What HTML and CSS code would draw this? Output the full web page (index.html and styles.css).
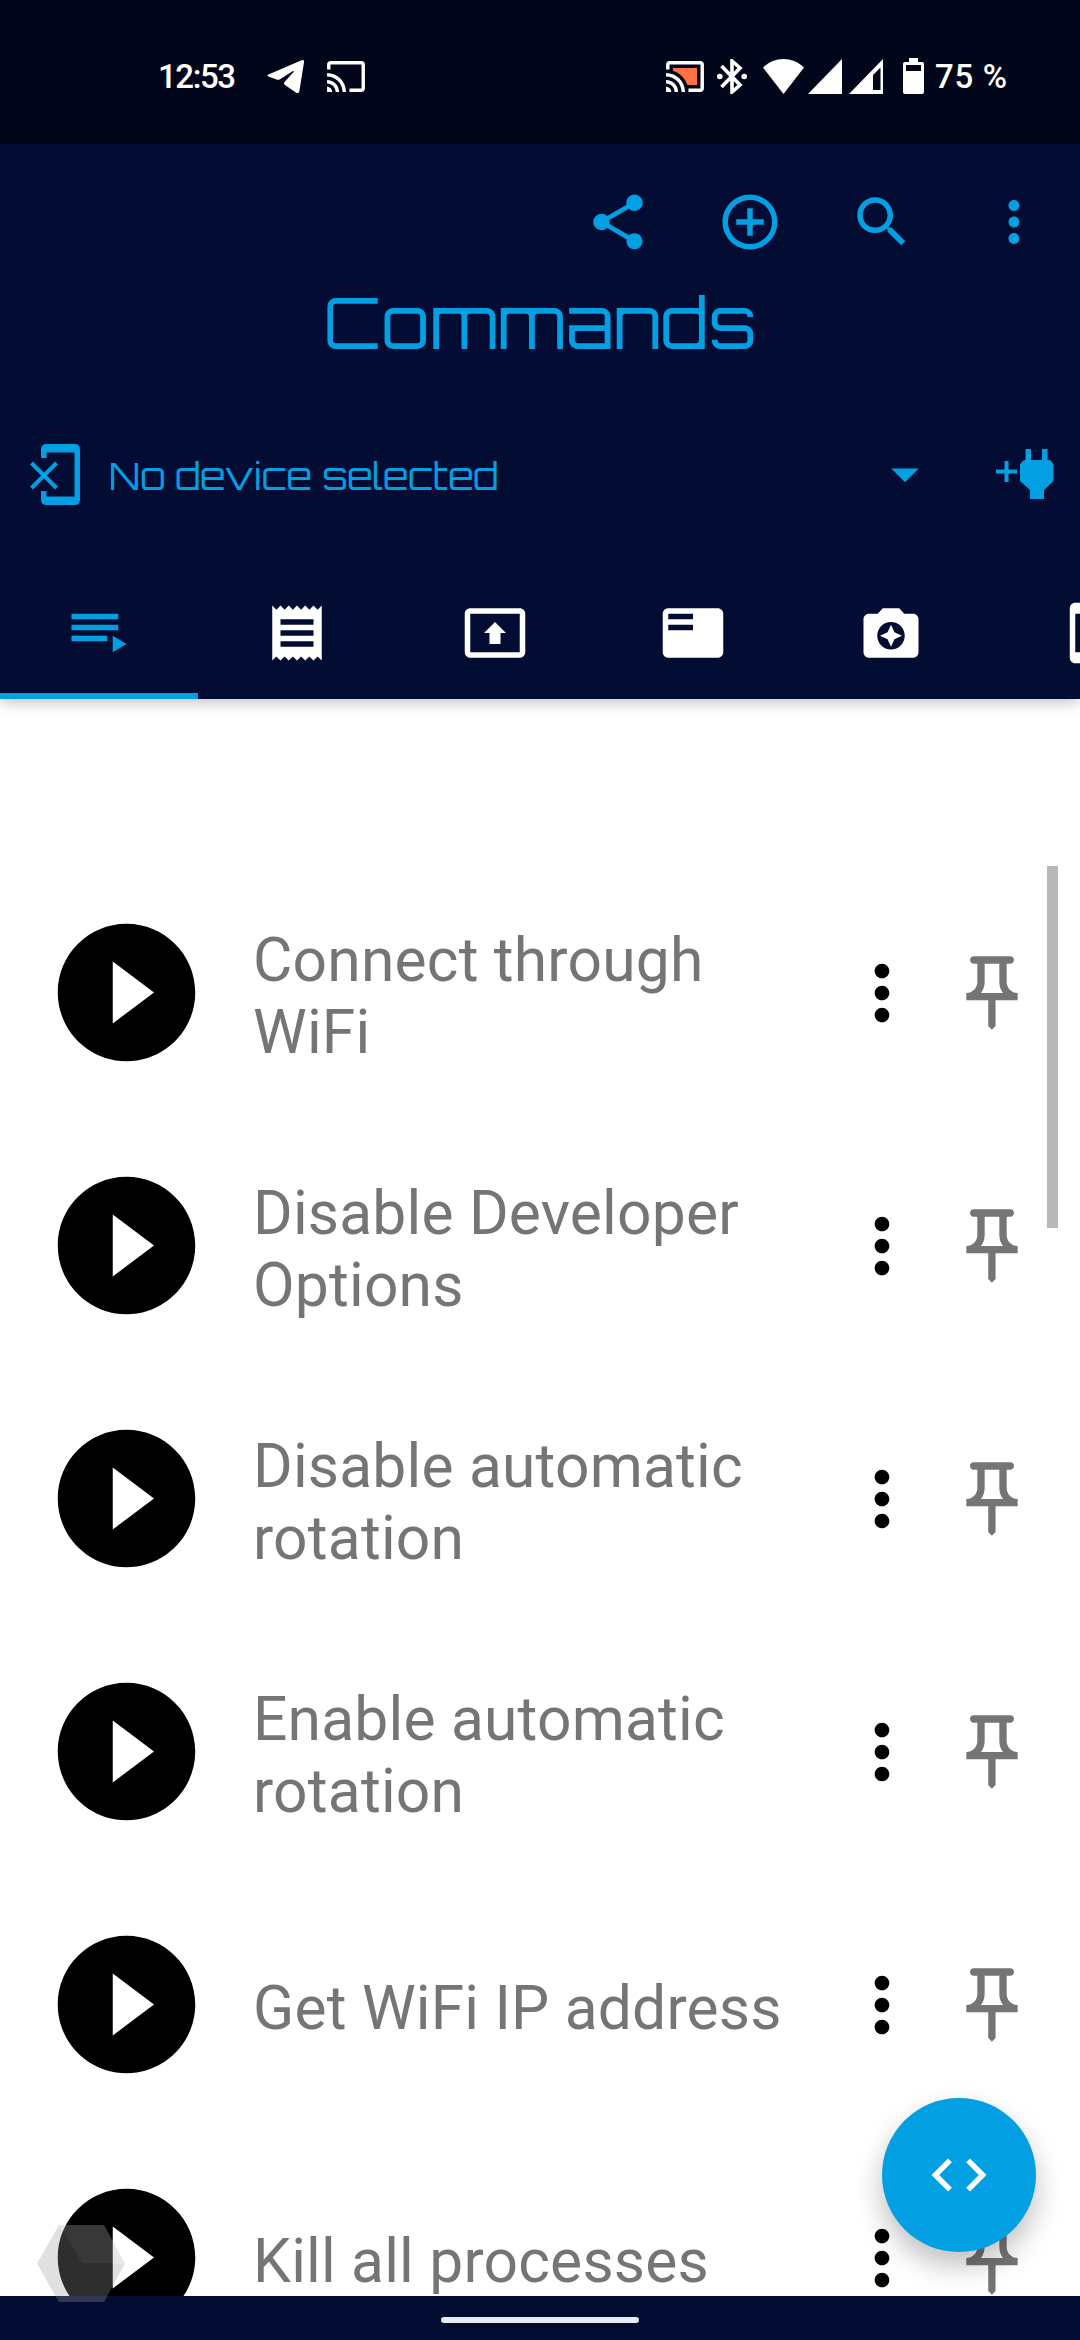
FILE: index.html
```html
<!DOCTYPE html>
<html lang="en">
<head>
    <meta charset="UTF-8">
    <meta name="viewport" content="width=device-width, initial-scale=1.0">
    <title>Commands</title>
    <link rel="stylesheet" href="styles.css">
</head>
<body>
    <!-- shared icons -->
    <svg class="sprite" aria-hidden="true">
        <symbol id="play" viewBox="0 0 24 24"><path d="M12 2C6.48 2 2 6.48 2 12s4.48 10 10 10 10-4.48 10-10S17.52 2 12 2zm-2 14.5v-9l6 4.5-6 4.5z"/></symbol>
        <symbol id="more" viewBox="0 0 24 24"><path d="M12 8c1.1 0 2-.9 2-2s-.9-2-2-2-2 .9-2 2 .9 2 2 2zm0 2c-1.1 0-2 .9-2 2s.9 2 2 2 2-.9 2-2-.9-2-2-2zm0 6c-1.1 0-2 .9-2 2s.9 2 2 2 2-.9 2-2-.9-2-2-2z"/></symbol>
        <symbol id="pin" viewBox="0 0 24 24"><path d="M14 4v5c0 1.12.37 2.16 1 3H9c.65-.86 1-1.9 1-3V4h4m3-2H7c-.55 0-1 .45-1 1s.45 1 1 1h1v5c0 1.66-1.34 3-3 3v2h5.97v7l1 1 1-1v-7H19v-2c-1.66 0-3-1.34-3-3V4h1c.55 0 1-.45 1-1s-.45-1-1-1z"/></symbol>
    </svg>

    <div class="screen">
        <div class="status-bar">
            <div class="status-left">
                <span class="clock">12:53</span>
                <svg class="telegram" width="37" height="33" viewBox="0 0 37 33"><path d="M1.5 14.5L34.5.3c1.6-.6 2.8.3 2.5 2L32.400 31c-.4 2-1.800 2.600-3.500 1.400L18 25c-1.300-1-1.300-2-.2-3.200L26.500 12c.5-.7-.1-1.200-.9-.7L13 19.200c-1.200.7-2.200.8-3.500.3L1.500 16.600c-1.500-.6-1.500-1.500 0-2.100z"/></svg>
                <svg class="cast" width="38" height="31" viewBox="1 3 22 18"><path d="M21 3H3c-1.100 0-2 .9-2 2v3h2V5h18v14h-7v2h7c1.100 0 2-.9 2-2V5c0-1.100-.9-2-2-2zM1 18v3h3c0-1.660-1.340-3-3-3zm0-4v2c2.760 0 5 2.240 5 5h2c0-3.870-3.130-7-7-7zm0-4v2c4.970 0 9 4.030 9 9h2c0-6.080-4.930-11-11-11z"/></svg>
            </div>
            <div class="status-right">
                <svg width="38" height="31" viewBox="1 3 22 18"><path class="cast-fill" d="M5 7v1.600C9 9.900 12.100 13 13.400 17H19V7z"/><path d="M21 3H3c-1.100 0-2 .9-2 2v3h2V5h18v14h-7v2h7c1.100 0 2-.9 2-2V5c0-1.100-.9-2-2-2zM1 18v3h3c0-1.660-1.340-3-3-3zm0-4v2c2.760 0 5 2.240 5 5h2c0-3.870-3.130-7-7-7zm0-4v2c4.970 0 9 4.030 9 9h2c0-6.080-4.930-11-11-11z"/></svg>
                <svg class="bluetooth" width="30" height="35" viewBox="0 0 30 35"><path class="line" d="M4.500 7L23 26l-8 7V2l8 7L4.500 28"/><circle cx="2.800" cy="17.500" r="2.800"/><circle cx="27.200" cy="17.500" r="2.800"/></svg>
                <svg class="wifi" width="41" height="35" viewBox="0 0 41 35"><path d="M0 8.500C12-2.800 29-2.800 41 8.500L20.500 35z"/></svg>
                <svg class="signal" width="34" height="35" viewBox="0 0 34 35"><path d="M34 0v35H0z"/></svg>
                <svg class="signal2" width="34" height="35" viewBox="0 0 34 35"><path fill-rule="evenodd" d="M34 0v35H0zM31.500 8.500L24 16v15h7.500z"/></svg>
                <svg class="battery" width="21" height="36" viewBox="0 0 21 36"><path fill-rule="evenodd" d="M6 0h9v4h4q2 0 2 2v28q0 2-2 2H2q-2 0-2-2V6q0-2 2-2h4zM3 7v6h15V7z"/></svg>
                <span class="percent">75 %</span>
            </div>
        </div>

        <div class="header">
            <div class="toolbar">
                <svg class="icon" viewBox="0 0 24 24"><path d="M18 16.080c-.76 0-1.440.3-1.960.77L8.910 12.700c.05-.23.09-.46.09-.7s-.04-.47-.09-.7l7.050-4.110c.54.5 1.250.81 2.040.81 1.660 0 3-1.340 3-3s-1.340-3-3-3-3 1.340-3 3c0 .24.04.47.09.7L8.040 9.810C7.500 9.310 6.790 9 6 9c-1.660 0-3 1.340-3 3s1.340 3 3 3c.79 0 1.500-.31 2.040-.81l7.120 4.160c-.05.21-.08.43-.08.65 0 1.610 1.310 2.920 2.920 2.920s2.920-1.310 2.920-2.920-1.310-2.920-2.920-2.920z"/></svg>
                <svg class="icon" viewBox="0 0 24 24"><path d="M13 7h-2v4H7v2h4v4h2v-4h4v-2h-4V7zm-1-5C6.480 2 2 6.480 2 12s4.480 10 10 10 10-4.480 10-10S17.520 2 12 2zm0 18c-4.410 0-8-3.590-8-8s3.590-8 8-8 8 3.590 8 8-3.590 8-8 8z"/></svg>
                <svg class="icon" viewBox="0 0 24 24"><path d="M15.500 14h-.79l-.28-.27C15.410 12.590 16 11.110 16 9.500 16 5.910 13.090 3 9.500 3S3 5.910 3 9.500 5.910 16 9.500 16c1.610 0 3.090-.59 4.230-1.570l.27.28v.79l5 4.990L20.490 19l-4.990-5zm-6 0C7.010 14 5 11.990 5 9.500S7.010 5 9.500 5 14 7.010 14 9.500 11.990 14 9.500 14z"/></svg>
                <svg class="icon"><use href="#more"/></svg>
            </div>
            <h1>Commands</h1>
            <div class="device">
                <svg class="no-device" width="50" height="61" viewBox="0 0 50 61"><path d="M11 14V5.500Q11 0 16.500 0h28Q50 0 50 5.500v50Q50 61 44.500 61h-28Q11 61 11 55.500V47h5.500v5.500h28v-44h-28V14z"/><path class="cross" d="M1.500 19L26.500 44M26.500 19L1.500 44"/></svg>
                <span class="device-name">No device selected</span>
                <svg class="icon dropdown" viewBox="0 0 24 24"><path d="M7 10l5 5 5-5z"/></svg>
                <svg class="plug" width="58" height="50" viewBox="0 0 58 50"><path d="M8.500 12h4v8.500H21v4h-8.500V33h-4v-8.500H0v-4h8.500zM29.500 0H35v11h11V0h5.500v11h1q2 0 3.500 2.300l1.500 2.200v16.500L48 41v9H34v-9l-10-9V15.500l1.500-2.200Q27 11 29.500 11z"/></svg>
            </div>
            <div class="tabs">
                <div class="tab active"><svg class="icon" viewBox="0 0 24 24"><path d="M19 9H2v2h17V9zm0-4H2v2h17V5zM2 15h13v-2H2v2zm15-2v6l5-3-5-3z"/></svg></div>
                <div class="tab"><svg class="icon" viewBox="0 0 24 24"><path d="M18 17H6v-2h12v2zm0-4H6v-2h12v2zm0-4H6V7h12v2zM3 22l1.500-1.500L6 22l1.500-1.500L9 22l1.500-1.500L12 22l1.500-1.500L15 22l1.500-1.500L18 22l1.500-1.500L21 22V2l-1.500 1.500L18 2l-1.500 1.500L15 2l-1.500 1.500L12 2l-1.500 1.500L9 2 7.500 3.500 6 2 4.500 3.500 3 2v20z"/></svg></div>
                <div class="tab"><svg class="icon" viewBox="0 0 24 24"><path d="M21 3H3c-1.110 0-2 .89-2 2v14c0 1.110.89 2 2 2h18c1.110 0 2-.89 2-2V5c0-1.110-.89-2-2-2zm0 16.020H3V4.980h18v14.040zM10 12H8l4-4 4 4h-2v4h-4v-4z"/></svg></div>
                <div class="tab"><svg class="icon" viewBox="0 0 24 24"><path d="M21 3H3c-1.100 0-2 .9-2 2v14c0 1.100.9 2 2 2h18c1.100 0 2-.9 2-2V5c0-1.100-.9-2-2-2zm-9 8H3V9h9v2zm0-4H3V5h9v2z"/></svg></div>
                <div class="tab"><svg class="icon" viewBox="0 0 24 24"><path d="M9 3L7.170 5H4c-1.100 0-2 .9-2 2v12c0 1.100.9 2 2 2h16c1.100 0 2-.9 2-2V7c0-1.100-.9-2-2-2h-3.170L15 3H9zm3 15c-2.760 0-5-2.240-5-5s2.240-5 5-5 5 2.240 5 5-2.240 5-5 5z"/><path d="M12 17l1.250-2.750L16 13l-2.750-1.250L12 9l-1.250 2.750L8 13l2.750 1.250z"/></svg></div>
                <div class="tab"><svg class="icon" viewBox="0 0 24 24"><path d="M17 1.010L7 1c-1.100 0-1.990.9-1.990 2v18c0 1.100.89 2 1.990 2h10c1.100 0 2-.9 2-2V3c0-1.100-.9-1.990-2-1.990zM17 19H7V5h10v14z"/></svg></div>
            </div>
        </div>

        <div class="commands">
            <div class="command">
                <svg class="play"><use href="#play"/></svg>
                <div class="label">Connect through WiFi</div>
                <svg class="more"><use href="#more"/></svg>
                <svg class="pin"><use href="#pin"/></svg>
            </div>
            <div class="command">
                <svg class="play"><use href="#play"/></svg>
                <div class="label">Disable Developer Options</div>
                <svg class="more"><use href="#more"/></svg>
                <svg class="pin"><use href="#pin"/></svg>
            </div>
            <div class="command">
                <svg class="play"><use href="#play"/></svg>
                <div class="label">Disable automatic rotation</div>
                <svg class="more"><use href="#more"/></svg>
                <svg class="pin"><use href="#pin"/></svg>
            </div>
            <div class="command">
                <svg class="play"><use href="#play"/></svg>
                <div class="label">Enable automatic rotation</div>
                <svg class="more"><use href="#more"/></svg>
                <svg class="pin"><use href="#pin"/></svg>
            </div>
            <div class="command">
                <svg class="play"><use href="#play"/></svg>
                <div class="label">Get WiFi IP address</div>
                <svg class="more"><use href="#more"/></svg>
                <svg class="pin"><use href="#pin"/></svg>
            </div>
            <div class="command">
                <svg class="play"><use href="#play"/></svg>
                <div class="label">Kill all processes</div>
                <svg class="more"><use href="#more"/></svg>
                <svg class="pin"><use href="#pin"/></svg>
            </div>
            <div class="scrollbar"></div>
            <div class="fab">
                <svg class="icon" viewBox="0 0 24 24"><path d="M9.400 16.600L4.800 12l4.600-4.600L8 6l-6 6 6 6 1.400-1.400zm5.200 0l4.600-4.600-4.600-4.600L16 6l6 6-6 6-1.400-1.400z"/></svg>
            </div>
        </div>

        <div class="nav-bar"><div class="handle"></div></div>

        <svg class="hexagon" width="88" height="77" viewBox="0 0 88 77"><path class="hex-dark" d="M22 0L0 38.500 22 77h45l21-38.500H45z"/><path class="hex-light" d="M22 0h45l21 38.500H45z"/></svg>
    </div>
</body>
</html>
```
FILE: styles.css
```css
body {
    margin: 0;
    font-family: Roboto, "Liberation Sans", sans-serif;
    background-color: #fff;
}

svg {
    display: block;
    flex-shrink: 0;
}

.sprite {
    position: absolute;
    width: 0;
    height: 0;
}

.icon {
    width: 66px;
    height: 66px;
}

.screen {
    position: relative;
    display: flex;
    flex-direction: column;
    width: 1080px;
    height: 2340px;
    overflow: hidden;
}

/* status bar */
.status-bar {
    display: flex;
    justify-content: space-between;
    box-sizing: border-box;
    height: 144px;
    padding: 8px 72px 0 158px;
    background-color: #01061a;
    color: #fff;
    fill: #fff;
    font-size: 33px;
    font-weight: 500;
}

.status-left,
.status-right {
    display: flex;
    align-items: center;
    height: 136px;
}

.clock {
    width: 109px;
    letter-spacing: -1.4px;
}

.cast {
    margin-left: 23px;
}

.cast-fill {
    fill: #ff7043;
}

.bluetooth {
    margin-left: 13px;
}

.bluetooth .line {
    fill: none;
    stroke: #fff;
    stroke-width: 3.6;
}

.wifi {
    margin-left: 16px;
}

.signal {
    margin-left: 4px;
}

.signal2 {
    margin-left: 7px;
}

.battery {
    margin-left: 20px;
}

.percent {
    width: 73px;
    margin-left: 11px;
    white-space: nowrap;
    letter-spacing: 0.7px;
}

/* header */
.header {
    position: relative;
    z-index: 1;
    height: 555px;
    background-color: #030c32;
    color: #029fe3;
    fill: #029fe3;
    box-shadow: 0 3px 14px rgba(0, 0, 0, 0.25);
    font-family: Orbitron, "DejaVu Sans", sans-serif;
}

.toolbar {
    display: flex;
    justify-content: flex-end;
    gap: 66px;
    padding: 45px 33px 0 0;
}

h1 {
    margin: 25px 0 0;
    height: 86px;
    line-height: 84px;
    text-align: center;
    font-size: 70px;
    font-weight: normal;
}

.device {
    display: flex;
    align-items: center;
    height: 66px;
    margin-top: 75px;
    padding: 0 26px 0 30px;
}

.no-device .cross {
    fill: none;
    stroke: #029fe3;
    stroke-width: 4;
}

.device-name {
    flex: 1;
    margin-left: 29px;
    padding-top: 2px;
    font-size: 37.2px;
}

.plug {
    margin-left: 58px;
}

.tabs {
    display: flex;
    height: 132px;
    margin-top: 60px;
    overflow: hidden;
    fill: #fff;
}

.tab {
    display: flex;
    flex: 0 0 198px;
    justify-content: center;
    box-sizing: border-box;
    padding-top: 33px;
    border-bottom: 6px solid transparent;
}

.tab.active {
    fill: #029fe3;
    border-color: #029fe3;
}

/* command list */
.commands {
    position: relative;
    box-sizing: border-box;
    height: 1597px;
    padding-top: 167px;
    overflow: hidden;
}

.command {
    display: flex;
    align-items: center;
    height: 253px;
    padding-left: 44px;
}

.play {
    width: 165px;
    height: 165px;
}

.label {
    width: 555px;
    margin: 0 30px 0 44px;
    padding-top: 8px;
    color: #757575;
    font-size: 60.5px;
    line-height: 72px;
    letter-spacing: 0.2px;
}

.more,
.pin {
    width: 88px;
    height: 88px;
}

.pin {
    margin-left: 22px;
    fill: #757575;
}

.scrollbar {
    position: absolute;
    top: 167px;
    right: 22px;
    width: 11px;
    height: 362px;
    background-color: #b8b8b8;
}

.fab {
    position: absolute;
    right: 44px;
    bottom: 44px;
    display: flex;
    align-items: center;
    justify-content: center;
    width: 154px;
    height: 154px;
    border-radius: 50%;
    background-color: #029fe3;
    fill: #fff;
    box-shadow: 0 14px 28px rgba(0, 0, 0, 0.25);
}

/* gesture bar */
.nav-bar {
    display: flex;
    justify-content: center;
    box-sizing: border-box;
    height: 44px;
    padding-top: 21px;
    background-color: #030c32;
}

.handle {
    width: 198px;
    height: 6px;
    border-radius: 3px;
    background-color: #e8ecf2;
}

/* floating overlay button */
.hexagon {
    position: absolute;
    left: 37px;
    bottom: 38px;
}

.hex-dark {
    fill: rgba(151, 151, 151, 0.3);
}

.hex-light {
    fill: rgba(182, 182, 182, 0.31);
}
```
